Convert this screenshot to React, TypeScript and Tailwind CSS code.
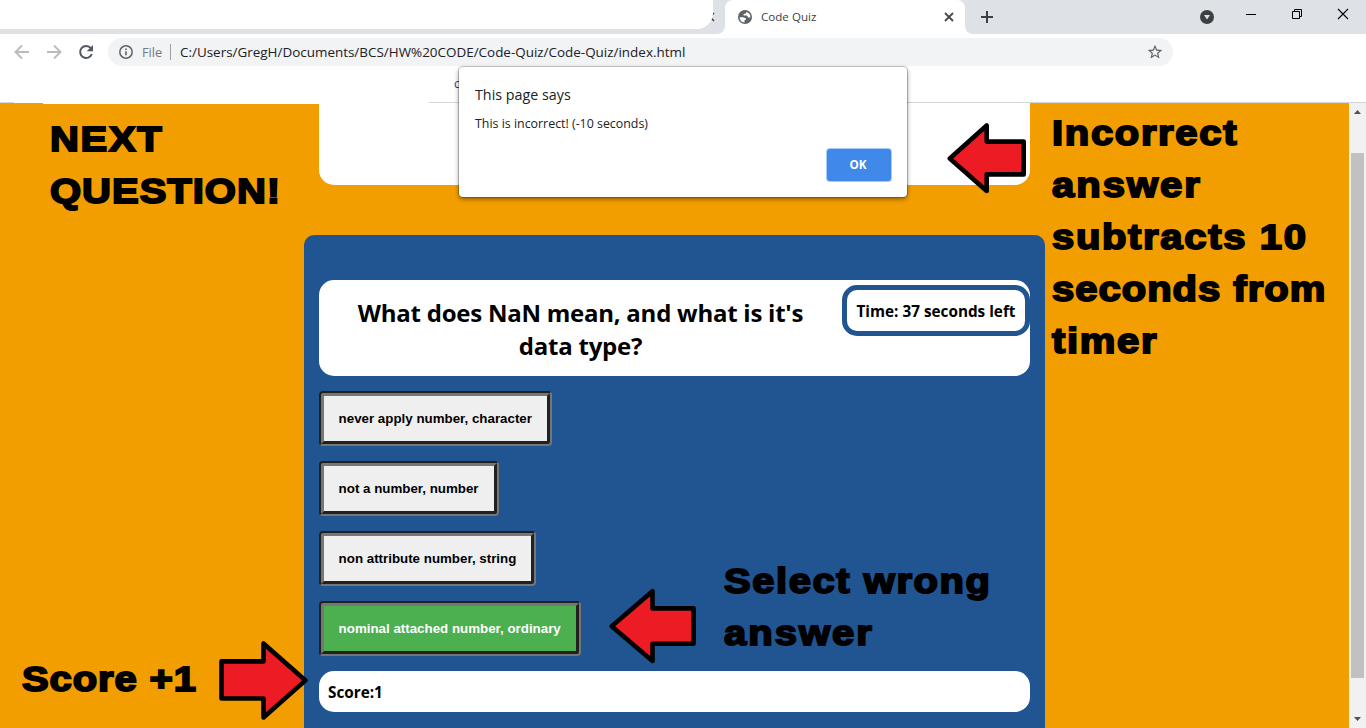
import type { ReactNode } from "react";

function Arrow({ className, points, viewBox }: { className: string; points: string; viewBox: string }) {
  return (
    <svg className={`absolute ${className}`} viewBox={viewBox}>
      <polygon points={points} fill="#ed1c24" stroke="#000" strokeWidth="4.6" strokeLinejoin="round" />
    </svg>
  );
}

function Note({ className, children }: { className: string; children: ReactNode }) {
  return (
    <div
      className={`absolute flex origin-left scale-x-[1.12] flex-col font-['Liberation_Sans',sans-serif] text-[35.7px] leading-[52px] font-bold tracking-[1.5px] whitespace-nowrap text-black [-webkit-text-stroke:1.9px_#000] ${className}`}
    >
      {children}
    </div>
  );
}

function Answer({ label, selected = false }: { label: string; selected?: boolean }) {
  return (
    <button
      className={`h-[55px] rounded-[4px] border-5 border-[#767676] pr-[15px] pl-[14.6px] text-left font-['Liberation_Sans',sans-serif] text-[13.333px] font-bold whitespace-nowrap [border-style:groove] ${
        selected ? "bg-[#4caf50] text-white" : "bg-[#efefef] text-black"
      }`}
    >
      {label}
    </button>
  );
}

function TabStrip() {
  return (
    <div className="flex h-[34px] bg-white">
      <div className="relative w-[725px] rounded-br-[8px] bg-[#dee1e6]">
        <svg className="absolute top-[12px] left-[705px] size-[10px]" viewBox="0 0 10 10" stroke="#45494d" strokeWidth="1.7">
          <path d="M1 1l8 8M9 1L1 9" />
        </svg>
        <div className="relative h-[29px] w-[713px] rounded-br-[16px] bg-white" />
      </div>
      <div className="w-[240px] bg-[linear-gradient(#dee1e6_50%,white_50%)]">
        <div className="flex h-full items-center rounded-t-[8px] bg-white pr-[11px] pl-[13px]">
          <svg className="size-[14px]" viewBox="0 0 14 14">
            <circle cx="7" cy="7" r="7" fill="#5f6368" />
            <path d="M8.300 1.900l-.5 1.500-2.200.5v1.600h3.400l1.200 2h2.200A5.400 5.400 0 0 0 8.300 1.900z" fill="#fff" />
            <path d="M1.600 7.200h3.400l2.800 1v1.900H6.500v2.300A5.400 5.400 0 0 1 1.600 7.200z" fill="#fff" />
          </svg>
          <span className="ml-[9px] flex-1 text-[11.6px] leading-[34px] text-[#3c4043]">Code Quiz</span>
          <svg className="size-[10px]" viewBox="0 0 10 10" stroke="#45494d" strokeWidth="1.8">
            <path d="M1 1l8 8M9 1L1 9" />
          </svg>
        </div>
      </div>
      <div className="relative flex flex-1 rounded-bl-[8px] bg-[#dee1e6]">
        <svg className="h-[34px] w-[401px]" viewBox="965 0 401 34" fill="none">
          <path d="M981 17h12M987 11v12" stroke="#3c4043" strokeWidth="2" />
          <circle cx="1207" cy="17" r="7" fill="#3c4043" />
          <path d="M1204 15h6l-3 4.500z" fill="#dee1e6" />
          <path d="M1246 14.500h10" stroke="#000" />
          <path d="M1292.500 11.500h7v7h-7zM1294.500 11.500v-2h7v7h-2" stroke="#000" />
          <path d="M1338 9l10 10M1348 9l-10 10" stroke="#000" strokeWidth="1.100" />
        </svg>
      </div>
    </div>
  );
}

function Toolbar() {
  return (
    <div className="flex h-[36px] items-center text-[#5f6368]">
      <svg className="h-[36px] w-[108px]" viewBox="0 34 108 36" fill="none">
        <path d="M29 52H16M22 45.500L15.500 52l6.500 6.500" stroke="#b9bbbe" strokeWidth="1.900" />
        <path d="M47 52h13M54 45.500l6.500 6.500-6.500 6.500" stroke="#b9bbbe" strokeWidth="1.900" />
        <path d="M90.800 48.200A6 6 0 1 0 91.800 54" stroke="#54585d" strokeWidth="2" />
        <path d="M93 45v6.300h-6.300z" fill="#54585d" />
      </svg>
      <div className="flex h-[28px] w-[1065px] items-center rounded-full bg-[#f1f3f4] pr-[10px] pl-[11px]">
        <svg className="size-[14px]" viewBox="0 0 14 14" fill="none" stroke="#5f6368">
          <circle cx="7" cy="7" r="6.200" strokeWidth="1.500" />
          <path d="M7 6.200v4M7 3.400v1.500" strokeWidth="1.600" />
        </svg>
        <span className="ml-[9px] w-[20px] text-[12.8px] leading-[28px] text-[#75797e]">File</span>
        <span className="ml-[8px] h-[16px] w-px bg-[#9aa0a6]" />
        <span className="ml-[9px] flex-1 text-[13.45px] leading-[28px] whitespace-nowrap text-[#202124]">
          C:/Users/GregH/Documents/BCS/HW%20CODE/Code-Quiz/Code-Quiz/index.html
        </span>
        <svg className="size-[16px]" viewBox="1 1 22 22" fill="#5f6368">
          <path d="M22 9.240l-7.190-.62L12 2 9.190 8.630 2 9.240l5.460 4.730L5.820 21 12 17.270 18.180 21l-1.630-7.030L22 9.240zM12 15.400l-3.760 2.270 1-4.280-3.320-2.880 4.380-.38L12 6.100l1.710 4.040 4.380.38-3.320 2.880 1 4.280L12 15.400z" />
        </svg>
      </div>
    </div>
  );
}

function Dialog() {
  return (
    <div className="absolute top-[67px] left-[459px] flex h-[130px] w-[448px] flex-col rounded-[4px] bg-white px-[16px] shadow-[0_0_0_1px_rgba(0,0,0,0.2),0_2px_5px_rgba(0,0,0,0.45)]">
      <h1 className="mt-[17px] text-[14.3px] leading-[21px] text-[#202124]">This page says</h1>
      <p className="mt-[10px] text-[12.4px] leading-[18px] text-[#202124]">This is incorrect! (-10 seconds)</p>
      <button className="mt-[16px] h-[32px] w-[64px] self-end rounded-[3px] bg-[#4089eb] pr-[2px] pb-[2px] text-[11.7px] leading-[30px] font-bold text-white shadow-[0_0_0_1px_#a9caf7]">
        OK
      </button>
    </div>
  );
}

export default function App() {
  return (
    <div className="relative flex h-[728px] w-[1366px] flex-col overflow-hidden bg-white font-['Open_Sans',sans-serif]">
      <TabStrip />
      <Toolbar />
      <div className="flex h-[33px] items-end">
        <div className="h-px w-[14px] bg-[#d5d7dc]" />
        <div className="ml-[415px] h-full flex-1 border-b border-[#d3d5d9] pl-[25px] text-[12px] leading-[28px] text-[#3c4043]">c</div>
      </div>

      <div className="flex flex-1">
        <main className="flex w-[1349px] flex-col bg-[#f39e00]">
          <div className="flex">
            <div className="ml-[43px] h-px w-[276px] bg-white" />
          </div>
          <div className="-mt-px ml-[319px] h-[82px] w-[711px] rounded-b-[15px] bg-white" />
          <section className="mt-[50px] ml-[304px] flex w-[741px] flex-1 flex-col items-start rounded-t-[10px] bg-[#205591] px-[15px] pt-[45px]">
            <div className="flex h-[96px] w-full items-start rounded-[15px] bg-white">
              <h2 className="flex-1 pt-[16px] text-center text-[24px] leading-[33px] font-bold tracking-[-0.24px] text-black">
                What does NaN mean, and what is it's
                <br />
                data type?
              </h2>
              <div className="mt-[5px] h-[51px] w-[188px] rounded-[15px] border-5 border-[#205591] bg-white text-center text-[15.3px] leading-[42px] font-bold whitespace-nowrap text-black">
                Time: 37 seconds left
              </div>
            </div>
            <div className="mt-[15px] flex flex-col items-start gap-[15px]">
              <Answer label="never apply number, character" />
              <Answer label="not a number, number" />
              <Answer label="non attribute number, string" />
              <Answer label="nominal attached number, ordinary" selected />
            </div>
            <div className="mt-[15px] h-[41px] w-full rounded-[15px] bg-white pl-[9px] text-[15.300px] leading-[43px] font-bold text-black">
              Score:1
            </div>
          </section>
        </main>
        <div className="flex w-[17px] flex-col items-center bg-[#f1f1f1]">
          <svg className="h-[50px] w-[17px]" viewBox="0 0 17 50">
            <path d="M5 11h7L8.500 7z" fill="#505050" />
          </svg>
          <div className="h-[525px] w-[13px] bg-[#c1c1c1]" />
          <svg className="h-[50px] w-[17px]" viewBox="0 0 17 50">
            <path d="M5 39h7l-3.500 4z" fill="#505050" />
          </svg>
        </div>
      </div>

      <Note className="top-[113px] left-[50px]">
        <span>NEXT</span>
        <span className="tracking-[0.9px]">QUESTION!</span>
      </Note>
      <Note className="top-[107px] left-[1052px]">
        <span>Incorrect</span>
        <span className="tracking-[1.8px]">answer</span>
        <span>subtracts 10</span>
        <span className="tracking-[0.9px]">seconds from</span>
        <span>timer</span>
      </Note>
      <Note className="top-[555px] left-[724px]">
        <span className="tracking-[1.4px]">Select wrong</span>
        <span className="tracking-[1.8px]">answer</span>
      </Note>
      <Note className="top-[653px] left-[22px]">
        <span className="tracking-[0.8px]">Score +1</span>
      </Note>

      <Arrow className="top-[120px] left-[944px] h-[76px] w-[86px]" viewBox="944 120 86 76" points="949.8,158.500 986.700,125.500 986.700,141.600 1023.700,141.600 1023.700,174.400 986.700,174.400 986.700,191" />
      <Arrow className="top-[586px] left-[606px] h-[80px] w-[94px]" viewBox="606 586 94 80" points="611.700,626.200 652.500,591.300 652.500,608.400 693.600,608.400 693.600,643.700 652.500,643.700 652.500,661" />
      <Arrow className="top-[638px] left-[216px] h-[85px] w-[96px]" viewBox="216 638 96 85" points="305.500,680.400 263.500,643.500 263.500,661.400 221.500,661.400 221.500,698.500 263.500,698.500 263.500,717.500" />

      <Dialog />
    </div>
  );
}
